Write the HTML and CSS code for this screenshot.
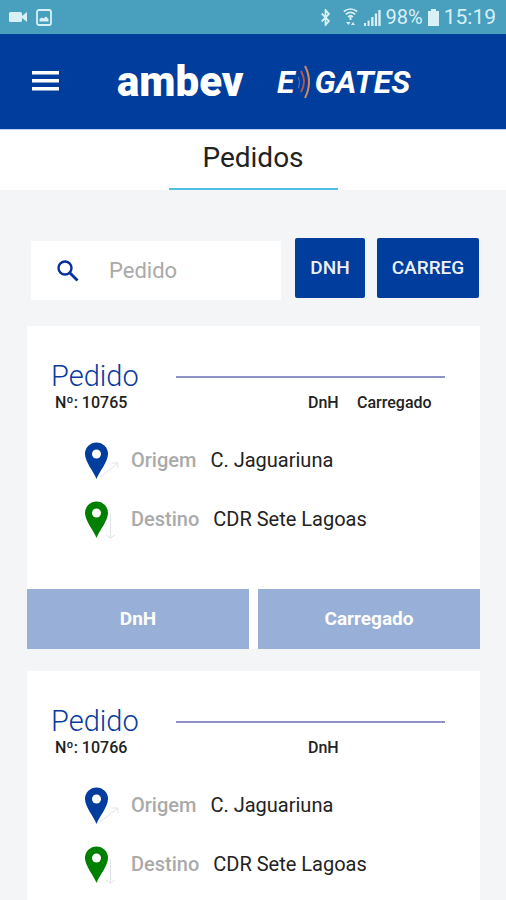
FILE: index.html
```html
<!DOCTYPE html>
<html lang="pt-BR">
<head>
<meta charset="UTF-8">
<meta name="viewport" content="width=device-width, initial-scale=1.0">
<title>Pedidos</title>
<link rel="stylesheet" href="styles.css">
</head>
<body>
<div class="status-bar">
  <div class="status-group">
    <svg width="19" height="12" viewBox="0 0 19 12" fill="currentColor"><rect x="0" y="1" width="13" height="10" rx="1.5"/><path d="M13 5l5-4v10l-5-4z"/></svg>
    <svg width="16" height="17" viewBox="0 0 16 17"><rect x="1" y="1" width="14" height="15" rx="2" fill="none" stroke="currentColor" stroke-width="1.8"/><path d="M3.5 12.500V10l2.500-1.500 1.500 1L10 7.500l2.500 2.500v2.500z" fill="currentColor"/></svg>
  </div>
  <div class="status-group status-right">
    <svg width="11" height="17" viewBox="0 0 13 17" preserveAspectRatio="none" fill="none" stroke="currentColor" stroke-width="2"><path d="M2 4.500l8.500 7.500L6.500 16V1l4 4L2 12.500"/></svg>
    <svg class="wifi" width="15" height="18" viewBox="0 0 15 18" fill="none" stroke="currentColor" stroke-width="1.700"><path d="M0.800 3.500q6.700-5 13.400 0M2.800 6.300q4.700-4 9.400 0M5 9q2.500-2.500 5 0"/><path d="M7.500 9v3" stroke-width="2"/><path d="M3 14l2.500 3 2-3zM8 17l2-3 2 3z" fill="currentColor" stroke="none"/></svg>
    <svg width="17" height="17" viewBox="0 0 17 17" fill="currentColor"><path d="M0 14h2v3H0zM3.600 11.500h2V17h-2zM7.200 8h2.300v9H7.200zM10.800 4.500h2.300V17h-2.300zM14.300 1h2.400v16h-2.400z"/></svg>
    <span>98%</span>
    <svg width="11" height="17" viewBox="0 0 11 17" fill="currentColor"><path d="M3 0h5v2h3v15H0V2h3z"/></svg>
    <span class="clock">15:19</span>
  </div>
</div>

<header class="header">
  <button class="menu-btn" type="button" aria-label="Menu">
    <svg width="27" height="20" viewBox="0 0 27 20" fill="#fff"><rect width="27" height="3.500"/><rect y="8" width="27" height="3.500"/><rect y="16" width="27" height="3.500"/></svg>
  </button>
  <div class="logo-ambev">ambev</div>
  <div class="logo-egates">
    <span>E</span>
    <svg width="14" height="36" viewBox="0 0 14 36" fill="none"><path d="M1.500 13q2 5.500 0 11" stroke="#6f76a8"/><path d="M4 7q6 10.500 0 21" stroke="#b8544c" stroke-width="2"/><path d="M8 2q8 15.500 0 32" stroke="#d08a5c" stroke-width="2"/></svg>
    <span>GATES</span>
  </div>
</header>

<nav class="tabs">
  <a class="tab" href="#pedidos">Pedidos</a>
</nav>

<main class="content" id="pedidos">
  <form class="search-row">
    <label class="search-box">
      <svg width="22" height="22" viewBox="0 0 22 22" fill="none" stroke="#0a2fa0"><circle cx="8" cy="8" r="6.500" stroke-width="2.400"/><path d="M13 13l7.500 7.500" stroke-width="2.800"/></svg>
      <input type="text" placeholder="Pedido" aria-label="Pedido">
    </label>
    <button class="filter-btn" type="button">DNH</button>
    <button class="filter-btn filter-wide" type="button">CARREG</button>
  </form>

  <section class="card">
    <div class="card-body">
      <div class="card-title">
        <h2>Pedido</h2>
        <hr>
      </div>
      <div class="card-info">
        <span class="number">Nº: 10765</span>
        <span class="status">DnH</span>
        <span>Carregado</span>
      </div>
      <div class="place">
        <svg class="pin pin-origin" width="36" height="38" viewBox="0 0 36 38"><path class="arrow" d="M15 35L33 21M27 21h6v5"/><path d="M11.500 37C9 30 0 20 0 12a11.500 11.500 0 0 1 23 0c0 8-9 18-11.500 25z"/><circle cx="11.500" cy="12" r="4.500"/></svg>
        <span class="label">Origem</span>
        <span>C. Jaguariuna</span>
      </div>
      <div class="place">
        <svg class="pin pin-dest" width="36" height="38" viewBox="0 0 36 38"><path class="arrow" d="M25.500 13v24M21 34l4.500 3 4.500-3"/><path d="M11.500 37C9 30 0 20 0 12a11.500 11.500 0 0 1 23 0c0 8-9 18-11.500 25z"/><circle cx="11.500" cy="12" r="4.500"/></svg>
        <span class="label">Destino</span>
        <span>CDR Sete Lagoas</span>
      </div>
    </div>
    <div class="card-actions">
      <button type="button">DnH</button>
      <button type="button">Carregado</button>
    </div>
  </section>

  <section class="card">
    <div class="card-body">
      <div class="card-title">
        <h2>Pedido</h2>
        <hr>
      </div>
      <div class="card-info">
        <span class="number">Nº: 10766</span>
        <span class="status">DnH</span>
      </div>
      <div class="place">
        <svg class="pin pin-origin" width="36" height="38" viewBox="0 0 36 38"><path class="arrow" d="M15 35L33 21M27 21h6v5"/><path d="M11.500 37C9 30 0 20 0 12a11.500 11.500 0 0 1 23 0c0 8-9 18-11.500 25z"/><circle cx="11.500" cy="12" r="4.500"/></svg>
        <span class="label">Origem</span>
        <span>C. Jaguariuna</span>
      </div>
      <div class="place">
        <svg class="pin pin-dest" width="36" height="38" viewBox="0 0 36 38"><path class="arrow" d="M25.500 13v24M21 34l4.500 3 4.500-3"/><path d="M11.500 37C9 30 0 20 0 12a11.500 11.500 0 0 1 23 0c0 8-9 18-11.500 25z"/><circle cx="11.500" cy="12" r="4.500"/></svg>
        <span class="label">Destino</span>
        <span>CDR Sete Lagoas</span>
      </div>
    </div>
  </section>
</main>
</body>
</html>
```
FILE: styles.css
```css
* {
  box-sizing: border-box;
}
body {
  margin: 0;
  height: 100vh;
  display: flex;
  flex-direction: column;
  overflow: hidden; /* only the order list scrolls */
  font-family: Roboto, sans-serif;
  color: #222;
  background-color: #f3f5f7;
}
button {
  border: none;
  padding: 0 0 2px;
  font-family: inherit;
  cursor: pointer;
}

/* Phone status bar */
.status-bar {
  flex: none;
  display: flex;
  justify-content: space-between;
  align-items: center;
  height: 34px;
  padding: 0 10px 0 9px;
  background-color: #489fbe;
  color: #d8f0f6;
  font-size: 20px;
}
.status-group {
  display: flex;
  align-items: center;
  gap: 8px;
}
.status-right {
  gap: 5px;
}
.wifi {
  margin: 0 1px 0 7px;
}
.clock {
  font-size: 21px;
}

.header {
  flex: none;
  display: flex;
  align-items: center;
  height: 96px;
  padding: 0 32px;
  background-color: #003d9c;
  border-bottom: 1px solid #c5cff0;
  color: #fff;
}
.menu-btn {
  display: flex;
  margin-right: 58px;
  background: none;
}
.logo-ambev {
  width: 126px;
  margin-right: 34px;
  font-size: 42px;
  line-height: 48px;
  font-weight: 900;
}
.logo-egates {
  display: flex;
  align-items: center;
  gap: 3px;
  font-size: 32px;
  font-weight: 700;
  font-style: italic;
}

/* Page title tab */
.tabs {
  flex: none;
  display: flex;
  justify-content: center;
  height: 60px;
  background-color: #fff;
}
.tab {
  width: 169px;
  border-bottom: 2px solid #50bfe2;
  font-size: 28px;
  line-height: 56px;
  text-align: center;
  text-decoration: none;
  color: #222;
}

.content {
  flex: 1;
  min-height: 0;
  overflow: hidden auto;
  scrollbar-width: none;
  padding: 48px 26px 0 27px;
}
.search-row {
  display: flex;
  gap: 12px;
  margin-bottom: 26px;
  padding: 0 1px 0 4px;
}
.search-box {
  flex: 1;
  min-width: 0;
  display: flex;
  align-items: center;
  height: 59px;
  margin: 3px 2px 0 0;
  padding-left: 26px;
  background-color: #fff;
}
.search-box svg {
  flex: none;
}
.search-box input {
  flex: 1;
  min-width: 0;
  margin-left: 30px;
  padding: 0;
  border: none;
  outline: none;
  background: none;
  font-family: inherit;
  font-size: 22px;
}
.search-box input::placeholder {
  color: #aaa;
}
.filter-btn {
  flex: none;
  width: 70px;
  height: 60px;
  border-radius: 2px;
  background-color: #003d9c;
  color: #eef1fb;
  font-size: 19px;
  font-weight: 500;
}
.filter-wide {
  width: 102px;
}

/* Order card */
.card {
  margin-bottom: 22px;
  background-color: #fff;
}
.card-body {
  height: 263px;
  padding: 32px 35px 0 24px;
}
.card-title {
  display: flex;
  align-items: center;
  gap: 37px;
}
.card-title h2 {
  margin: 0;
  font-size: 29px;
  line-height: 36px;
  font-weight: 300;
  color: #0b3a9e;
}
.card-title hr {
  flex: 1;
  margin: 2px 0 0;
  border: none;
  border-top: 2px solid #8f91c9;
}
.card-info {
  display: flex;
  padding-left: 4px;
  margin-bottom: 19px;
  font-size: 16px;
  line-height: 18px;
  font-weight: 500;
}
.card-info .number {
  width: 253px;
}
.card-info .status {
  width: 49px;
}
.place {
  display: flex;
  align-items: center;
  height: 59px;
  padding-left: 34px;
  font-size: 20px;
}
.place span {
  margin-bottom: 2px;
}
.place .label {
  margin: 0 14px 2px 10px;
  font-weight: 500;
  color: #aaa;
}
.pin .arrow {
  fill: none;
  stroke: #e3e3ea;
}
.pin circle {
  fill: #fff;
}
.pin-origin {
  fill: #003d9c;
}
.pin-dest {
  fill: #008000;
}
.card-actions {
  display: grid;
  grid-template-columns: 1fr 1fr;
  gap: 9px;
}
.card-actions button {
  height: 60px;
  background-color: #98b0d7;
  color: #fff;
  font-size: 19px;
  font-weight: 700;
}
```
